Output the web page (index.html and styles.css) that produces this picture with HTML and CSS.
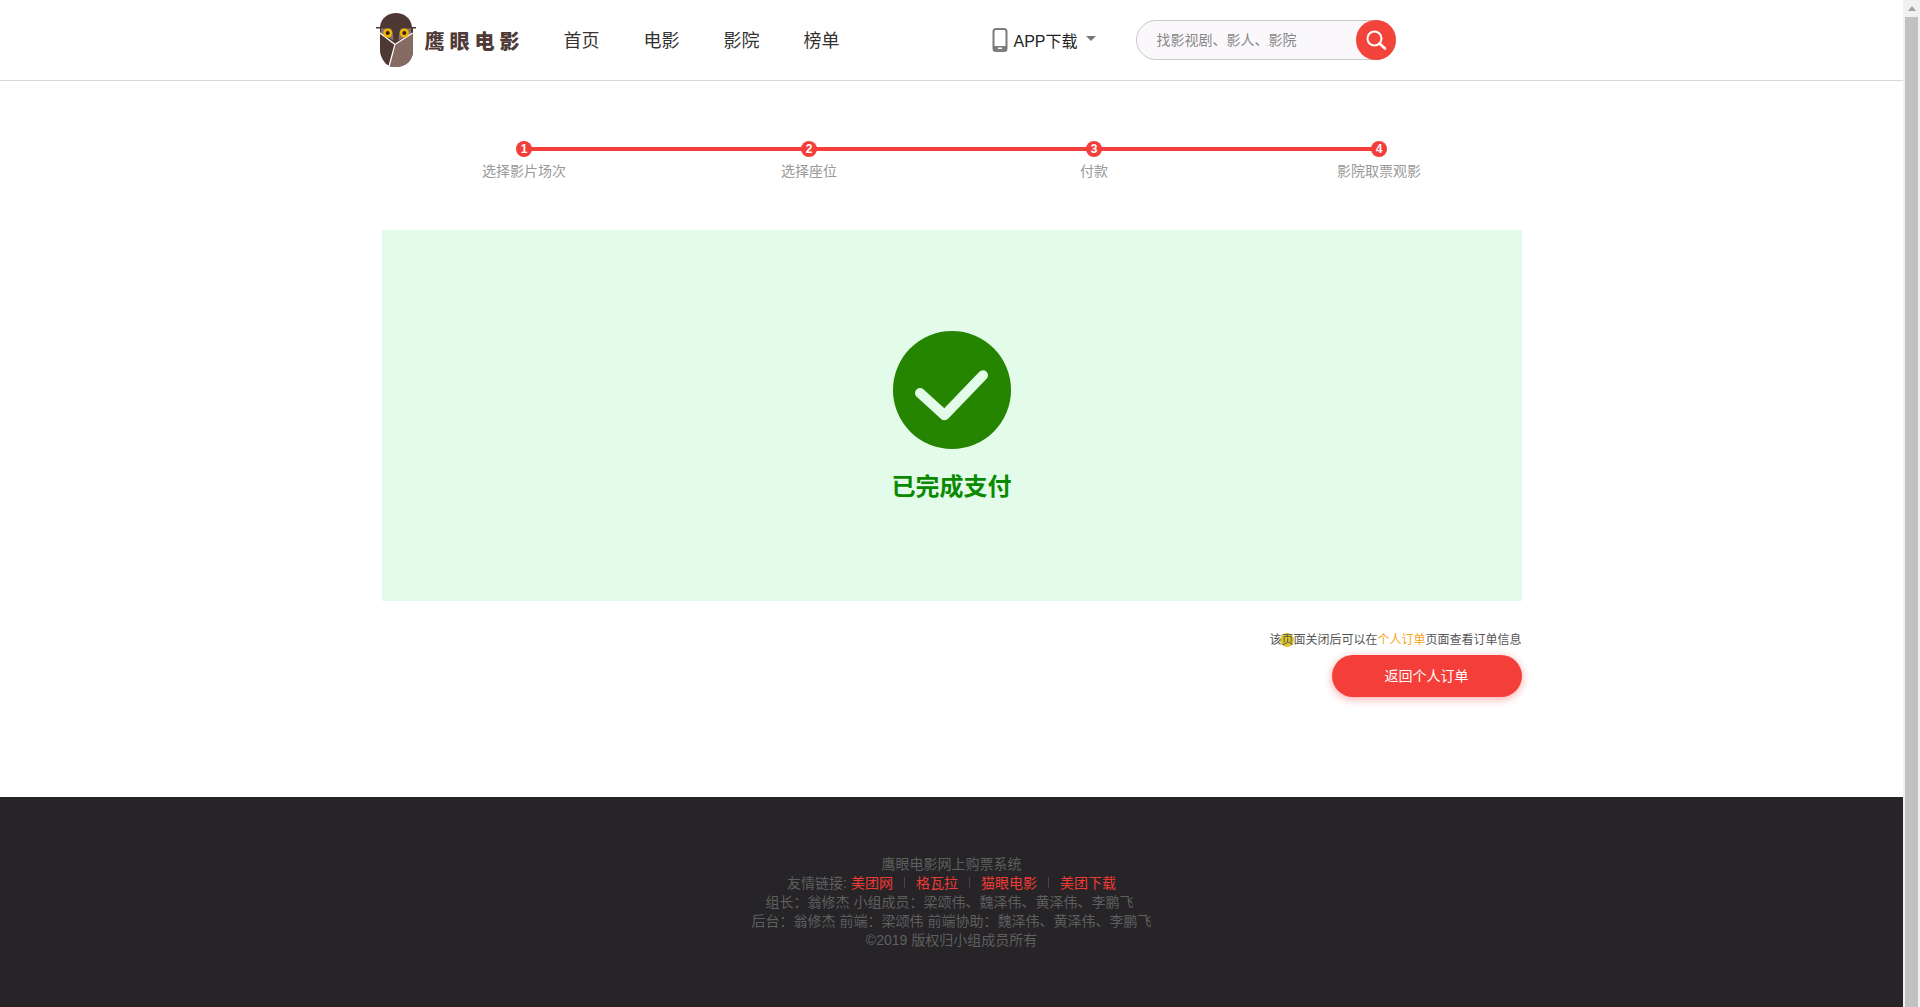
FILE: index.html
```html
<!DOCTYPE html>
<html>
<head>
<meta charset="utf-8"/>
<title>鹰眼电影</title>
<link rel="stylesheet" href="styles.css">
</head>
<body>
<div class="page">
  <header class="header">
    <div class="header-inner">
      <a class="logo">
        <svg class="owl" width="40" height="54" viewBox="0 0 40 54">
          <path fill="#4e3833" d="M4 14C5 5 12 0 20 0s15 5 16 14h4v1.500H37V38c0 9-7 16-17 16-4 0-7-1-10-3-3-4-6-8-6-14V15.500H0V14z"/>
          <path fill="#866b63" d="M37 20 24 29l-4 3-7 21.500c2 .5 4 .5 7 .5 10 0 17-7 17-16z"/>
          <path fill="#85746d" d="M5 15.500h10c1 1 1.500 3 2 6l.5 6L5 20.500zM35 15.500H25c-1 1-1.500 3-2 6l-.5 6L35 20.500z"/>
          <path fill="none" stroke="#fff" stroke-width="1.300" d="M4 20 19 31.500 13 53.500M36.500 20 19 31.500"/>
          <circle cx="11.700" cy="20" r="4.500" fill="#f5b400"/>
          <circle cx="11.700" cy="20" r="2" fill="#2c1f1c"/>
          <circle cx="28.300" cy="20" r="4.500" fill="#f5b400"/>
          <circle cx="28.300" cy="20" r="2" fill="#2c1f1c"/>
        </svg>
        <span class="logo-text">鹰眼电影</span>
      </a>
      <nav class="nav">
        <a>首页</a>
        <a>电影</a>
        <a>影院</a>
        <a>榜单</a>
      </nav>
      <div class="app">
        <svg width="16" height="24" viewBox="0 0 16 24">
          <rect x="1.500" y="1" width="13" height="22" rx="2.500" fill="#fff" stroke="#7d7d7d" stroke-width="2"/>
          <path d="M1.500 18h13v2.500a2.500 2.500 0 0 1-2.500 2.500H4a2.500 2.500 0 0 1-2.500-2.500z" fill="#7d7d7d"/>
          <rect x="6" y="19.500" width="4" height="1.500" fill="#fff"/>
        </svg>
        <span class="app-text">APP下载</span>
        <i class="caret"></i>
      </div>
      <div class="search">
        <span class="search-text">找影视剧、影人、影院</span>
        <span class="search-btn">
          <svg width="22" height="22" viewBox="0 0 22 22">
            <circle cx="9.500" cy="9.500" r="7" fill="none" stroke="#fff" stroke-width="2"/>
            <path d="M14.500 14.500 20 19.500" fill="none" stroke="#fff" stroke-width="2.600" stroke-linecap="round"/>
          </svg>
        </span>
      </div>
    </div>
  </header>

  <main class="main">
    <ol class="steps">
      <li class="step"><span class="num">1</span><span class="step-label">选择影片场次</span></li>
      <li class="step"><span class="num">2</span><span class="step-label">选择座位</span></li>
      <li class="step"><span class="num">3</span><span class="step-label">付款</span></li>
      <li class="step"><span class="num">4</span><span class="step-label">影院取票观影</span></li>
    </ol>

    <section class="done">
      <svg width="118" height="118" viewBox="0 0 118 118">
        <circle cx="59" cy="59" r="59" fill="#258500"/>
        <path d="M27 62 51.500 84.300 90 44.300" fill="none" stroke="#e3fbe9" stroke-width="10" stroke-linecap="round" stroke-linejoin="round"/>
      </svg>
      <h2 class="done-title">已完成支付</h2>
    </section>

    <div class="after">
      <p class="note">该<span class="cursor">页</span>面关闭后可以在<a class="note-link">个人订单</a>页面查看订单信息</p>
      <a class="back-btn">返回个人订单</a>
    </div>
  </main>

  <footer class="footer">
    <p>鹰眼电影网上购票系统</p>
    <p>友情链接: <a>美团网</a><i class="sep"></i><a>格瓦拉</a><i class="sep"></i><a>猫眼电影</a><i class="sep"></i><a>美团下载</a></p>
    <p>组长：翁修杰 小组成员：梁颂伟、魏泽伟、黄泽伟、李鹏飞&nbsp;</p>
    <p>后台：翁修杰 前端：梁颂伟 前端协助：魏泽伟、黄泽伟、李鹏飞</p>
    <p>©2019 版权归小组成员所有</p>
  </footer>
</div>

<div class="scrollbar">
  <div class="scroll-arrow"></div>
  <div class="scroll-thumb"></div>
</div>
</body>
</html>
```

FILE: styles.css
```css
* {
   box-sizing: border-box;
}

html, body {
   height: 100%;
}

body {
   margin: 0;
   display: flex;
   overflow: hidden;
   background-color: white;
   font-family: "Liberation Sans", "Noto Sans CJK SC", sans-serif;
   font-size: 14px;
   color: #333;
}

p, h2, ol {
   margin: 0;
   padding: 0;
}

.page {
   flex: 1;
   min-width: 0;
   display: flex;
   flex-direction: column;
}

/* header */
.header {
   height: 81px;
   flex: none;
   border-bottom: 1px solid #d9d9d9;
}

.header-inner {
   width: 1140px;
   height: 80px;
   margin: 0 auto;
   display: flex;
   align-items: center;
}

.logo {
   display: flex;
   align-items: center;
   margin-left: -6px;
   width: 188px;
}

.owl {
   flex: none;
}

.logo-text {
   margin: 1px 0 0 9px;
   font-size: 20px;
   font-weight: 900;
   letter-spacing: 5px;
   white-space: nowrap;
   color: #4e3a36;
}

.nav {
   display: flex;
   gap: 44px;
   margin-top: -2px;
   font-size: 18px;
   color: #333;
}

.app {
   display: flex;
   align-items: center;
   margin-left: 152px;
   width: 144px;
   color: #222;
   font-size: 16px;
}

.app-text {
   margin-left: 6px;
}

.caret {
   width: 0;
   height: 0;
   margin: -3px 0 0 8px;
   border-left: 5px solid transparent;
   border-right: 5px solid transparent;
   border-top: 5px solid #777;
}

.search {
   width: 260px;
   height: 40px;
   display: flex;
   align-items: center;
   justify-content: space-between;
   padding-left: 20px;
   background-color: #faf8fb;
   border: 1px solid #c8c8c8;
   border-radius: 20px;
}

.search-text {
   margin-top: -2px;
   font-size: 14px;
   color: #888;
}

.search-btn {
   width: 40px;
   height: 40px;
   margin-right: -1px;
   display: flex;
   align-items: center;
   justify-content: center;
   background-color: #f2443a;
   border-radius: 50%;
}

/* content */
.main {
   flex: 1;
   width: 1140px;
   margin: 0 auto;
}

.steps {
   display: grid;
   grid-template-columns: repeat(4, 1fr);
   padding-top: 60px;
   list-style: none;
}

.step {
   position: relative;
   display: flex;
   flex-direction: column;
   align-items: center;
   height: 89px;
}

.step:not(:last-child)::after {
   content: "";
   position: absolute;
   top: 6px;
   left: 50%;
   width: 100%;
   height: 4px;
   background-color: #f43e39;
}

.num {
   position: relative;
   z-index: 1;
   width: 16px;
   height: 16px;
   border-radius: 50%;
   background-color: #f43e39;
   color: white;
   font-size: 12px;
   font-weight: bold;
   line-height: 16px;
   text-align: center;
}

.step-label {
   margin-top: 4px;
   line-height: 20px;
   color: #999;
}

.done {
   height: 371px;
   padding-top: 101px;
   display: flex;
   flex-direction: column;
   align-items: center;
   background-color: #e3fbe9;
}

.done-title {
   margin-top: 21px;
   font-size: 24px;
   line-height: 34px;
   font-weight: bold;
   color: #0a8a00;
}

.after {
   display: flex;
   flex-direction: column;
   align-items: flex-end;
   padding-top: 30px;
}

.note {
   font-size: 12px;
   line-height: 18px;
   color: #555;
}

.cursor {
   position: relative;
}

.cursor::before {
   content: "";
   position: absolute;
   z-index: -1;
   top: 0;
   left: -1px;
   width: 14px;
   height: 14px;
   border-radius: 50%;
   background-color: #e0c628;
}

.note-link {
   color: #f5a623;
}

.back-btn {
   width: 190px;
   height: 42px;
   margin-top: 6px;
   line-height: 42px;
   text-align: center;
   color: white;
   background-color: #f43e39;
   border-radius: 21px;
   box-shadow: 0 2px 8px rgba(244, 62, 57, 0.45);
}

/* footer */
.footer {
   height: 210px;
   flex: none;
   padding-top: 58px;
   background-color: #262427;
   color: #5f5f5f;
   line-height: 19px;
   text-align: center;
}

.footer a {
   color: #f03a36;
}

.sep {
   display: inline-block;
   width: 1px;
   height: 11px;
   margin: 0 11px;
   background-color: #444;
}

/* scrollbar */
.scrollbar {
   width: 17px;
   flex: none;
   display: flex;
   flex-direction: column;
   background-color: #f1f1f1;
}

.scroll-arrow {
   height: 17px;
   flex: none;
   display: flex;
   justify-content: center;
   padding-top: 6px;
}

.scroll-arrow::before {
   content: "";
   width: 0;
   height: 0;
   border-left: 4px solid transparent;
   border-right: 4px solid transparent;
   border-bottom: 5px solid #a3a3a3;
}

.scroll-thumb {
   flex: 1;
   margin: 0 2px;
   background-color: #c1c1c1;
}
```
